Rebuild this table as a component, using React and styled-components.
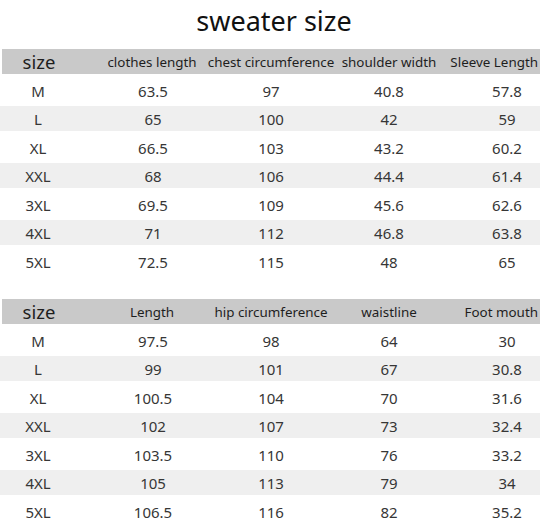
import React from "react";
import styled, { createGlobalStyle } from "styled-components";

const Global = createGlobalStyle`
  html, body { margin: 0; padding: 0; background: #fff; }
  body { font-family: "Noto Sans", "Open Sans", "Liberation Sans", sans-serif; overflow: hidden; }
`;

const Page = styled.div`
  width: 540px;
  height: 526px;
  overflow: hidden;
  display: flex;
  flex-direction: column;
`;

const Title = styled.h1`
  margin: 0 0 7px 0;
  padding-left: 8px;
  font-size: 27px;
  line-height: 42px;
  font-weight: 400;
  color: #111;
  text-align: center;
`;

const Table = styled.div`
  display: flex;
  flex-direction: column;
  margin-bottom: ${(p) => p.$gap || 0}px;
`;

const Row = styled.div`
  display: grid;
  grid-template-columns: 94px 118px 118px 118px 92px;
  height: ${(p) => (p.$shade ? 25 : 32)}px;
  padding-top: 1px;
  box-sizing: border-box;
  background: ${(p) => (p.$shade ? "#efefef" : "#fff")};
`;

const HeadRow = styled.div`
  display: grid;
  grid-template-columns: 92px 118px 118px 118px 92px;
  height: 25px;
  margin-left: 2px;
  background: #c9c9c9;
`;

const Cell = styled.div`
  display: flex;
  align-items: center;
  justify-content: center;
  white-space: nowrap;
  font-size: 15px;
  color: #363636;
  padding-right: ${(p) => (p.$first ? 18 : 0)}px;
  padding-left: ${(p) => (p.$last ? 26 : 0)}px;
`;

const HeadCell = styled.div`
  display: flex;
  align-items: center;
  justify-content: ${(p) => (p.$end ? "flex-end" : "center")};
  white-space: nowrap;
  font-size: ${(p) => (p.$big ? 18.5 : 13.4)}px;
  color: #1e1e1e;
  padding-right: ${(p) => (p.$first ? 18 : p.$end ? 2 : 0)}px;
  margin-left: ${(p) => (p.$shift || 0)}px;
`;

const sweater = {
  heads: ["clothes length", "chest circumference", "shoulder width", "Sleeve Length"],
  rows: [
    ["M", "63.5", "97", "40.8", "57.8"],
    ["L", "65", "100", "42", "59"],
    ["XL", "66.5", "103", "43.2", "60.2"],
    ["XXL", "68", "106", "44.4", "61.4"],
    ["3XL", "69.5", "109", "45.6", "62.6"],
    ["4XL", "71", "112", "46.8", "63.8"],
    ["5XL", "72.5", "115", "48", "65"],
  ],
};

const pants = {
  heads: ["Length", "hip circumference", "waistline", "Foot mouth"],
  rows: [
    ["M", "97.5", "98", "64", "30"],
    ["L", "99", "101", "67", "30.8"],
    ["XL", "100.5", "104", "70", "31.6"],
    ["XXL", "102", "107", "73", "32.4"],
    ["3XL", "103.5", "110", "76", "33.2"],
    ["4XL", "105", "113", "79", "34"],
    ["5XL", "106.5", "116", "82", "35.2"],
  ],
};

function SizeTable({ data, gap }) {
  return (
    <Table $gap={gap}>
      <HeadRow>
        <HeadCell $first $big>size</HeadCell>
        {data.heads.map((h, i) => (
          <HeadCell key={h} $end={i === 3} $shift={i === 0 ? -2 : 0}>{h}</HeadCell>
        ))}
      </HeadRow>
      {data.rows.map((r, ri) => (
        <Row key={r[0]} $shade={ri % 2 === 1}>
          {r.map((v, ci) => (
            <Cell key={ci} $first={ci === 0} $last={ci === 4}>
              {v}
            </Cell>
          ))}
        </Row>
      ))}
    </Table>
  );
}

export default function App() {
  return (
    <Page>
      <Global />
      <Title>sweater size</Title>
      <SizeTable data={sweater} gap={22} />
      <SizeTable data={pants} />
    </Page>
  );
}
